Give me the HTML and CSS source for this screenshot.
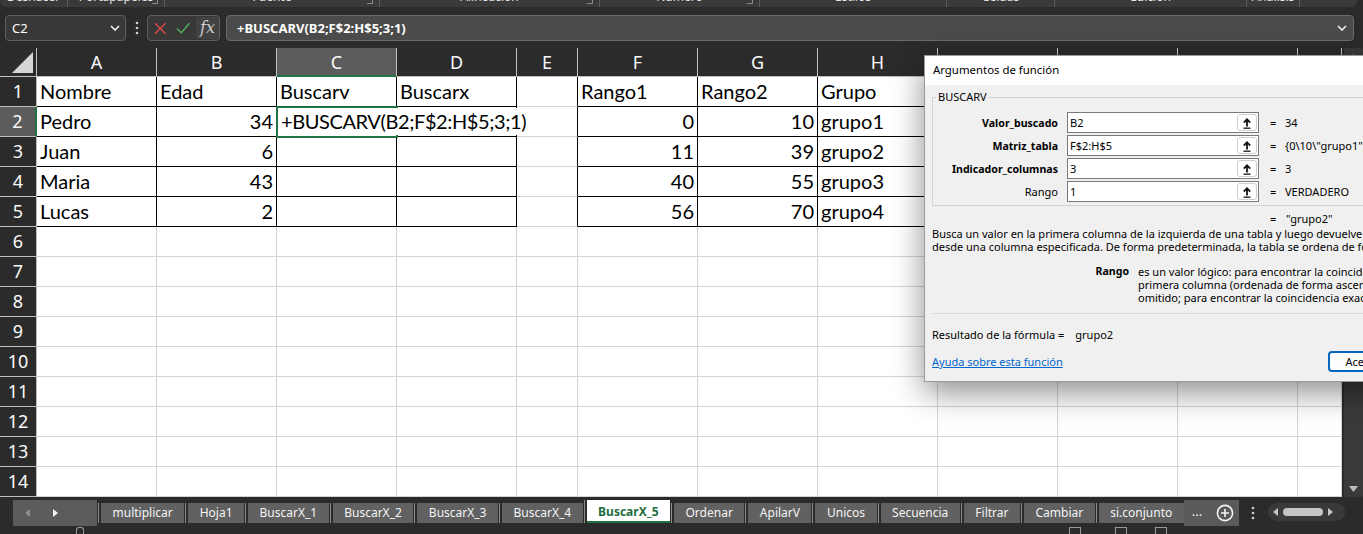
FILE: index.html
```html
<!DOCTYPE html>
<html lang="es">
<head>
<meta charset="utf-8">
<title>BuscarX_5</title>
<link rel="stylesheet" href="styles.css">
</head>
<body>
<div class="ribbon">
  <div class="rg w68"><span>Deshacer</span></div>
  <div class="rg w97"><span>Portapapeles</span><i class="launch"></i></div>
  <div class="rg w215"><span>Fuente</span><i class="launch"></i></div>
  <div class="rg w220"><span>Alineación</span><i class="launch"></i></div>
  <div class="rg w160"><span>Número</span><i class="launch"></i></div>
  <div class="rg w187"><span>Estilos</span></div>
  <div class="rg w108"><span>Celdas</span></div>
  <div class="rg w192"><span>Edición</span></div>
  <div class="rg w53"><span>Análisis</span></div>
</div>

<div class="fbar">
  <div class="namebox">
    <span>C2</span>
    <svg width="10" height="6" viewBox="0 0 10 6"><path d="M1 1l4 4 4-4" stroke="#f0f0f0" stroke-width="1.6" fill="none"/></svg>
  </div>
  <div class="vdots">
    <svg width="4" height="14" viewBox="0 0 4 14"><circle cx="2" cy="2" r="1.3" fill="#d0d0d0"/><circle cx="2" cy="7" r="1.3" fill="#d0d0d0"/><circle cx="2" cy="12" r="1.3" fill="#d0d0d0"/></svg>
  </div>
  <div class="fbtns">
    <svg class="fb-x" width="13" height="13" viewBox="0 0 13 13"><path d="M1 1l11 11M12 1L1 12" stroke="#e0484a" stroke-width="1.4" fill="none"/></svg>
    <svg class="fb-ok" width="15" height="12" viewBox="0 0 15 12"><path d="M1 6.5l4.5 4.5L14 1" stroke="#4fb25a" stroke-width="1.4" fill="none"/></svg>
    <span class="fx">fx</span>
  </div>
  <div class="finput">
    <span>+BUSCARV(B2;F$2:H$5;3;1)</span>
    <svg width="10" height="6" viewBox="0 0 10 6"><path d="M1 1l4 4 4-4" stroke="#f0f0f0" stroke-width="1.6" fill="none"/></svg>
  </div>
</div>

<div class="sheet">
  <div class="grid">
    <div class="corner"><svg width="21" height="21" viewBox="0 0 21 21"><polygon points="21,0 21,21 0,21" fill="#d6d6d6"/></svg></div>
    <div class="ch">A</div><div class="ch">B</div><div class="ch sel">C</div><div class="ch">D</div><div class="ch">E</div><div class="ch">F</div><div class="ch">G</div><div class="ch">H</div><div class="ch"></div><div class="ch"></div><div class="ch"></div><div class="ch"></div>

    <div class="rh">1</div>
    <div class="c b">Nombre</div><div class="c b">Edad</div><div class="c b">Buscarv</div><div class="c b">Buscarx</div><div class="c br"></div><div class="c b">Rango1</div><div class="c b">Rango2</div><div class="c b">Grupo</div><div class="c"></div><div class="c"></div><div class="c"></div><div class="c"></div>

    <div class="rh sel">2</div>
    <div class="c b">Pedro</div><div class="c b num">34</div><div class="c b act"><div class="editor">+BUSCARV(B2;F$2:H$5;3;1)</div></div><div class="c b"></div><div class="c br"></div><div class="c b num">0</div><div class="c b num">10</div><div class="c b">grupo1</div><div class="c"></div><div class="c"></div><div class="c"></div><div class="c"></div>

    <div class="rh">3</div>
    <div class="c b">Juan</div><div class="c b num">6</div><div class="c b"></div><div class="c b"></div><div class="c br"></div><div class="c b num">11</div><div class="c b num">39</div><div class="c b">grupo2</div><div class="c"></div><div class="c"></div><div class="c"></div><div class="c"></div>

    <div class="rh">4</div>
    <div class="c b">Maria</div><div class="c b num">43</div><div class="c b"></div><div class="c b"></div><div class="c br"></div><div class="c b num">40</div><div class="c b num">55</div><div class="c b">grupo3</div><div class="c"></div><div class="c"></div><div class="c"></div><div class="c"></div>

    <div class="rh">5</div>
    <div class="c b">Lucas</div><div class="c b num">2</div><div class="c b"></div><div class="c b"></div><div class="c br"></div><div class="c b num">56</div><div class="c b num">70</div><div class="c b">grupo4</div><div class="c"></div><div class="c"></div><div class="c"></div><div class="c"></div>

    <div class="rh">6</div>
    <div class="c"></div><div class="c"></div><div class="c"></div><div class="c"></div><div class="c"></div><div class="c"></div><div class="c"></div><div class="c"></div><div class="c"></div><div class="c"></div><div class="c"></div><div class="c"></div>
    <div class="rh">7</div>
    <div class="c"></div><div class="c"></div><div class="c"></div><div class="c"></div><div class="c"></div><div class="c"></div><div class="c"></div><div class="c"></div><div class="c"></div><div class="c"></div><div class="c"></div><div class="c"></div>
    <div class="rh">8</div>
    <div class="c"></div><div class="c"></div><div class="c"></div><div class="c"></div><div class="c"></div><div class="c"></div><div class="c"></div><div class="c"></div><div class="c"></div><div class="c"></div><div class="c"></div><div class="c"></div>
    <div class="rh">9</div>
    <div class="c"></div><div class="c"></div><div class="c"></div><div class="c"></div><div class="c"></div><div class="c"></div><div class="c"></div><div class="c"></div><div class="c"></div><div class="c"></div><div class="c"></div><div class="c"></div>
    <div class="rh">10</div>
    <div class="c"></div><div class="c"></div><div class="c"></div><div class="c"></div><div class="c"></div><div class="c"></div><div class="c"></div><div class="c"></div><div class="c"></div><div class="c"></div><div class="c"></div><div class="c"></div>
    <div class="rh">11</div>
    <div class="c"></div><div class="c"></div><div class="c"></div><div class="c"></div><div class="c"></div><div class="c"></div><div class="c"></div><div class="c"></div><div class="c"></div><div class="c"></div><div class="c"></div><div class="c"></div>
    <div class="rh">12</div>
    <div class="c"></div><div class="c"></div><div class="c"></div><div class="c"></div><div class="c"></div><div class="c"></div><div class="c"></div><div class="c"></div><div class="c"></div><div class="c"></div><div class="c"></div><div class="c"></div>
    <div class="rh">13</div>
    <div class="c"></div><div class="c"></div><div class="c"></div><div class="c"></div><div class="c"></div><div class="c"></div><div class="c"></div><div class="c"></div><div class="c"></div><div class="c"></div><div class="c"></div><div class="c"></div>
    <div class="rh">14</div>
    <div class="c"></div><div class="c"></div><div class="c"></div><div class="c"></div><div class="c"></div><div class="c"></div><div class="c"></div><div class="c"></div><div class="c"></div><div class="c"></div><div class="c"></div><div class="c"></div>
  </div>
  <div class="vscroll">
    <div class="vtrack">
      <svg width="9" height="6" viewBox="0 0 9 6"><polygon points="4.5,0 9,6 0,6" fill="#bdbdbd"/></svg>
      <svg width="9" height="6" viewBox="0 0 9 6"><polygon points="0,0 9,0 4.5,6" fill="#bdbdbd"/></svg>
    </div>
  </div>
</div>

<div class="tabbar">
  <div class="tabnav">
    <svg width="5" height="8" viewBox="0 0 5 8"><polygon points="5,0 5,8 0,4" fill="#8e8e8e"/></svg>
    <svg width="5" height="8" viewBox="0 0 5 8"><polygon points="0,0 5,4 0,8" fill="#f2f2f2"/></svg>
  </div>
  <div class="tabs">
    <div class="tab">multiplicar</div>
    <div class="tab">Hoja1</div>
    <div class="tab">BuscarX_1</div>
    <div class="tab">BuscarX_2</div>
    <div class="tab">BuscarX_3</div>
    <div class="tab">BuscarX_4</div>
    <div class="tab active">BuscarX_5</div>
    <div class="tab">Ordenar</div>
    <div class="tab">ApilarV</div>
    <div class="tab">Unicos</div>
    <div class="tab">Secuencia</div>
    <div class="tab">Filtrar</div>
    <div class="tab">Cambiar</div>
    <div class="tab">si.conjunto</div>
  </div>
  <div class="more">
    <span class="ell">...</span>
    <svg width="18" height="18" viewBox="0 0 18 18"><circle cx="9" cy="9" r="7.6" stroke="#f4f4f4" stroke-width="1.6" fill="none"/><path d="M9 5v8M5 9h8" stroke="#f4f4f4" stroke-width="1.6"/></svg>
  </div>
  <div class="tdots">
    <svg width="4" height="14" viewBox="0 0 4 14"><circle cx="2" cy="2" r="1.3" fill="#d0d0d0"/><circle cx="2" cy="7" r="1.3" fill="#d0d0d0"/><circle cx="2" cy="12" r="1.3" fill="#d0d0d0"/></svg>
  </div>
  <div class="hscroll">
    <svg width="5" height="8" viewBox="0 0 5 8"><polygon points="5,0 5,8 0,4" fill="#c8c8c8"/></svg>
    <div class="thumb"></div>
    <svg width="5" height="8" viewBox="0 0 5 8"><polygon points="0,0 5,4 0,8" fill="#c8c8c8"/></svg>
  </div>
</div>

<div class="status">
  <i class="sicon s1"></i>
  <i class="sicon s2"></i>
  <i class="sicon s3"></i>
  <i class="sicon s4"></i>
</div>

<div class="dialog">
  <div class="dtitle">Argumentos de función</div>
  <div class="dbody">
    <fieldset class="grp">
      <legend>BUSCARV</legend>
      <div class="arg first">
        <label class="alabel strong">Valor_buscado</label>
        <div class="inp"><span>B2</span><span class="pick"><svg width="10" height="12" viewBox="0 0 10 12"><path d="M5 9.5V2.5M1.8 5.6L5 2.2l3.2 3.4" stroke="#111" stroke-width="1.8" fill="none"/><path d="M1.5 11.2h7" stroke="#111" stroke-width="1.3"/></svg></span></div>
        <span class="eq">=</span><span class="val">34</span>
      </div>
      <div class="arg">
        <label class="alabel strong">Matriz_tabla</label>
        <div class="inp"><span>F$2:H$5</span><span class="pick"><svg width="10" height="12" viewBox="0 0 10 12"><path d="M5 9.5V2.5M1.8 5.6L5 2.2l3.2 3.4" stroke="#111" stroke-width="1.8" fill="none"/><path d="M1.5 11.2h7" stroke="#111" stroke-width="1.3"/></svg></span></div>
        <span class="eq">=</span><span class="val">{0\10\"grupo1";11\39\"grupo2";40\55\"grupo3"}</span>
      </div>
      <div class="arg">
        <label class="alabel strong">Indicador_columnas</label>
        <div class="inp"><span>3</span><span class="pick"><svg width="10" height="12" viewBox="0 0 10 12"><path d="M5 9.5V2.5M1.8 5.6L5 2.2l3.2 3.4" stroke="#111" stroke-width="1.8" fill="none"/><path d="M1.5 11.2h7" stroke="#111" stroke-width="1.3"/></svg></span></div>
        <span class="eq">=</span><span class="val">3</span>
      </div>
      <div class="arg">
        <label class="alabel">Rango</label>
        <div class="inp"><span>1</span><span class="pick"><svg width="10" height="12" viewBox="0 0 10 12"><path d="M5 9.5V2.5M1.8 5.6L5 2.2l3.2 3.4" stroke="#111" stroke-width="1.8" fill="none"/><path d="M1.5 11.2h7" stroke="#111" stroke-width="1.3"/></svg></span></div>
        <span class="eq">=</span><span class="val">VERDADERO</span>
      </div>
    </fieldset>
    <div class="res1"><span class="eq">=</span><span class="val">"grupo2"</span></div>
    <p class="desc">Busca un valor en la primera columna de la izquierda de una tabla y luego devuelve un valor en la misma fila<br>desde una columna especificada. De forma predeterminada, la tabla se ordena de forma ascendente.</p>
    <div class="argdesc">
      <span class="adname">Rango</span>
      <span class="adtext">es un valor lógico: para encontrar la coincidencia más cercana en la<br>primera columna (ordenada de forma ascendente) = VERDADERO u<br>omitido; para encontrar la coincidencia exacta = FALSO.</span>
    </div>
    <div class="dsep"></div>
    <div class="result">Resultado de la fórmula =<span class="rval">grupo2</span></div>
    <div class="dfoot">
      <a class="help" href="#">Ayuda sobre esta función</a>
      <div class="btn primary">Aceptar</div>
      <div class="btn">Cancelar</div>
    </div>
  </div>
</div>
</body>
</html>
```

FILE: styles.css
```css
* { box-sizing: border-box; }
html, body { margin: 0; padding: 0; }
body {
  width: 1363px;
  height: 534px;
  overflow: hidden;
  position: relative;
  background: #2b2b2b;
  color: #fff;
  font-family: "Noto Sans", "Open Sans", sans-serif;
}

/* ribbon remnant */
.ribbon {
  height: 7px;
  width: 1357px;
  background: #3a3a3a;
  border-radius: 0 0 8px 8px;
  display: flex;
  overflow: hidden;
}
.rg {
  flex: none;
  position: relative;
  height: 7px;
  text-align: center;
  border-right: 1px solid #5c5c5c;
  font-size: 12px;
  color: #e6e6e6;
}
.rg span { display: block; line-height: 14px; margin-top: -10px; }
.rg .launch {
  position: absolute;
  right: 6px;
  top: 0;
  width: 6px;
  height: 4px;
  border-right: 1px solid #8a8a8a;
  border-bottom: 1px solid #8a8a8a;
}
.w68 { width: 68px; }
.w97 { width: 97px; }
.w215 { width: 215px; }
.w220 { width: 220px; }
.w160 { width: 160px; }
.w187 { width: 187px; }
.w108 { width: 108px; }
.w192 { width: 192px; }
.w53 { width: 53px; }

/* formula bar */
.fbar {
  display: flex;
  align-items: center;
  height: 26px;
  margin: 8px 0 7px;
  padding: 0 9px 0 5px;
}
.namebox {
  width: 121px;
  height: 26px;
  background: #383838;
  border: 1px solid #5e5e5e;
  border-radius: 4px;
  display: flex;
  align-items: center;
  justify-content: space-between;
  padding: 0 5px 0 6px;
  font-size: 13px;
}
.vdots { width: 21px; display: flex; justify-content: center; align-items: center; }
.fbtns {
  width: 73px;
  height: 26px;
  background: #383838;
  border: 1px solid #5e5e5e;
  border-radius: 4px;
  display: flex;
  align-items: center;
  padding-left: 6px;
}
.fb-ok { margin-left: 9px; }
.fx {
  margin-left: 6px;
  width: 24px;
  height: 22px;
  background: #424242;
  border-radius: 3px;
  font-family: "DejaVu Serif", "Liberation Serif", serif;
  font-style: italic;
  font-size: 16px;
  line-height: 21px;
  color: #cfcfcf;
  text-align: center;
}
.finput {
  flex: 1;
  margin-left: 6px;
  height: 26px;
  background: #4b4b4b;
  border: 1px solid #6b6b6b;
  border-radius: 4px;
  display: flex;
  align-items: center;
  justify-content: space-between;
  padding: 0 6px 0 10px;
  font-size: 13px;
  font-weight: 700;
}

/* sheet grid */
.sheet { display: flex; height: 449px; }
.grid {
  width: 1342px;
  flex: none;
  display: grid;
  grid-template-columns: 37px repeat(4, 120px) 61px repeat(6, 120px) 44px;
  grid-template-rows: 29px repeat(14, 30px);
  background: #fff;
}
.corner {
  background: #2b2b2b;
  border-right: 1px solid #bdbdbd;
  border-bottom: 1px solid #bdbdbd;
  padding: 4px 0 0 12px;
}
.corner svg { display: block; }
.ch {
  background: #2b2b2b;
  border-right: 1px solid #c2c2c2;
  border-bottom: 1px solid #bdbdbd;
  font-size: 18px;
  line-height: 28px;
  text-align: center;
  color: #fafafa;
}
.ch.sel { background: #5c5c5c; border-bottom: 2px solid #217346; }
.rh {
  background: #2b2b2b;
  border-right: 1px solid #bdbdbd;
  border-bottom: 1px solid #bdbdbd;
  font-size: 18px;
  line-height: 29px;
  text-align: center;
  color: #fafafa;
}
.rh.sel { background: #5c5c5c; border-right: 2px solid #217346; }
.c {
  border-right: 1px solid #d4d4d4;
  border-bottom: 1px solid #d4d4d4;
  font-family: Lato, "Liberation Sans", sans-serif;
  font-size: 20px;
  line-height: 29px;
  color: #000;
  padding: 0 3px;
  white-space: nowrap;
  overflow: hidden;
}
.c.b { border-right-color: #000; border-bottom-color: #000; }
.c.br { border-right-color: #000; }
.c.num { text-align: right; }
.c.act {
  position: relative;
  overflow: visible;
  outline: 2px solid #217346;
  outline-offset: -1px;
  z-index: 2;
}
.editor {
  position: absolute;
  left: 1px;
  top: 1px;
  height: 27px;
  line-height: 27px;
  padding: 0 3px;
  background: #fff;
  white-space: nowrap;
  letter-spacing: -0.4px;
}

.vscroll {
  width: 21px;
  background: #2b2b2b;
  padding: 0 0 0 2px;
}
.vtrack {
  height: 100%;
  background: #3a3a3a;
  border-radius: 2px;
  display: flex;
  flex-direction: column;
  justify-content: space-between;
  align-items: center;
  padding: 6px 0 5px;
}

/* sheet tabs */
.tabbar {
  height: 29px;
  display: flex;
  align-items: flex-start;
  padding: 3px 0 0 13px;
  font-size: 12px;
}
.tabnav {
  width: 84px;
  height: 26px;
  background: #5c5c5c;
  display: flex;
  align-items: center;
  padding-left: 12px;
  gap: 23px;
}
.tabs { display: flex; align-items: flex-start; }
.tab {
  margin: 3px 0 0 4px;
  height: 20px;
  line-height: 20px;
  padding: 0 11.5px;
  background: #616161;
  color: #f4f4f4;
  white-space: nowrap;
  box-shadow: -2px 0 0 #2b2b2b, -3px 0 0 #8d8d8d;
}
.tab.active {
  margin-top: 0;
  height: 23px;
  line-height: 22px;
  background: #fff;
  color: #1d6d3f;
  font-weight: 700;
  border-bottom: 2px solid #217346;
  padding-top: 1px;
}
.more {
  width: 55px;
  height: 26px;
  background: #5a5a5a;
  display: flex;
  align-items: center;
  padding-left: 8px;
  gap: 14px;
}
.ell { font-size: 13px; line-height: 20px; color: #f4f4f4; margin-top: -4px; }
.more svg { display: block; }
.tdots { width: 29px; height: 26px; display: flex; align-items: center; justify-content: center; }
.hscroll {
  width: 77px;
  height: 18px;
  margin-top: 3px;
  background: #3a3a3a;
  border-radius: 9px;
  display: flex;
  align-items: center;
  padding: 0 7px 0 5px;
  gap: 5px;
}
.thumb { width: 40px; height: 8px; border-radius: 4px; background: #c6c6c6; }
.hscroll svg { flex: none; }

.status { height: 8px; position: relative; display: flex; }
.sicon {
  display: block;
  height: 8px;
  border: 1px solid #9a9a9a;
  border-bottom: none;
  margin-top: 1px;
}
.s1 { width: 8px; margin-left: 76px; border-radius: 3px 3px 0 0; }
.s2 { width: 12px; margin-left: 985px; }
.s3 { width: 12px; margin-left: 34px; }
.s4 { width: 12px; margin-left: 28px; }

/* function arguments dialog */
.dialog {
  position: absolute;
  left: 924px;
  top: 55px;
  width: 570px;
  height: 327px;
  background: #f0f0f0;
  border: 1px solid #9a9a9a;
  box-shadow: 0 10px 30px rgba(0, 0, 0, 0.45);
  color: #000;
  font-size: 11px;
  z-index: 5;
}
.dtitle {
  height: 29px;
  background: #fff;
  padding-left: 8px;
  line-height: 28px;
  font-size: 11.4px;
}
.dbody { padding: 0 7px; }
.grp {
  margin: 4px 0 0;
  padding: 0 0 3px;
  border: 1px solid #d3d3d3;
  min-width: 0;
}
.grp legend {
  margin-left: 3px;
  padding: 0 2px;
  line-height: 16px;
  font-size: 11px;
}
.arg {
  display: flex;
  align-items: center;
  height: 21px;
  margin-top: 2px;
  white-space: nowrap;
}
.arg.first { margin-top: 7px; }
.alabel { width: 125px; text-align: right; flex: none; font-size: 11px; }
.strong { font-weight: 700; font-size: 10.6px; }
.inp {
  flex: none;
  margin-left: 9px;
  width: 192px;
  height: 21px;
  background: #fff;
  border: 1px solid #7a7a7a;
  display: flex;
  align-items: center;
  justify-content: space-between;
  padding: 0 1px 0 2px;
}
.pick {
  width: 20px;
  height: 17px;
  border: 1px solid #cfcfcf;
  border-radius: 3px;
  background: #fff;
  display: flex;
  align-items: center;
  justify-content: center;
}
.pick svg { display: block; }
.eq { flex: none; margin-left: 11px; width: 15px; }
.val { white-space: nowrap; }
.res1 { margin-top: 6px; padding-left: 338px; line-height: 13px; display: flex; white-space: nowrap; }
.res1 .eq { margin-left: 0; width: 16px; }
.desc { margin: 2px 0 0; line-height: 13px; white-space: nowrap; }
.argdesc { display: flex; margin-top: 12px; line-height: 13px; white-space: nowrap; }
.adname { width: 197px; text-align: right; font-weight: 700; font-size: 10.6px; flex: none; }
.adtext { margin-left: 9px; }
.dsep { margin-top: 9px; border-top: 1px solid #d8d8d8; }
.result { margin-top: 14px; line-height: 13px; white-space: nowrap; }
.rval { margin-left: 11px; }
.dfoot { display: flex; align-items: center; margin-top: 10px; height: 21px; }
.help { color: #0066cc; text-decoration: underline; white-space: nowrap; }
.btn {
  width: 75px;
  height: 21px;
  border: 1px solid #b0b0b0;
  border-radius: 4px;
  background: #fdfdfd;
  text-align: center;
  line-height: 19px;
  margin-left: 8px;
}
.btn.primary { margin-left: auto; border: 2px solid #0067c0; line-height: 17px; }
```
